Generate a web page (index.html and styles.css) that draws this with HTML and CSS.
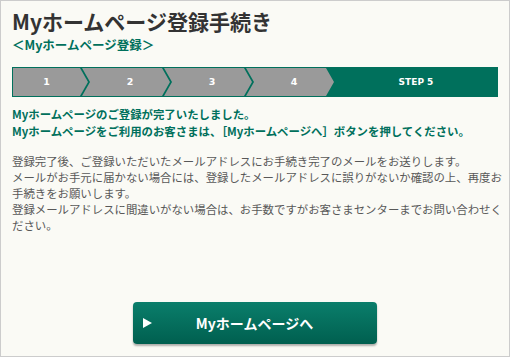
FILE: index.html
```html
<!DOCTYPE html>
<html lang="ja">
<head>
	<meta charset="UTF-8">
	<meta name="viewport" content="width=device-width, initial-scale=1.0">
	<title>Myホームページ登録手続き</title>
	<link rel="stylesheet" href="styles.css">
</head>
<body>
	<div class="page">
		<h1 class="title">Myホームページ登録手続き</h1>
		<p class="sub">＜Myホームページ登録＞</p>

		<!-- ステップ表示 -->
		<ol class="steps">
			<li class="step first">1</li>
			<li class="step">2</li>
			<li class="step">3</li>
			<li class="step">4</li>
			<li class="step current">STEP 5</li>
		</ol>

		<p class="done">
			Myホームページのご登録が完了いたしました。<br>
			Myホームページをご利用のお客さまは、［Myホームページへ］ボタンを押してください。
		</p>

		<p class="note">登録完了後、ご登録いただいたメールアドレスにお手続き完了のメールをお送りします。<br>メールがお手元に届かない場合には、登録したメールアドレスに誤りがないか確認の上、再度お手続きをお願いします。<br>登録メールアドレスに間違いがない場合は、お手数ですがお客さまセンターまでお問い合わせください。</p>

		<div class="actions">
			<a class="btn" href="#">
				<span class="arrow"></span>
				<span class="label">Myホームページへ</span>
			</a>
		</div>
	</div>
</body>
</html>
```

FILE: styles.css
```css
* {
	margin: 0;
	padding: 0;
	box-sizing: border-box;
}

body {
	font-family: "Noto Sans CJK JP", "Noto Sans", sans-serif;
	background: #fafaf5;
}

.page {
	width: 510px;
	height: 357px;
	border: 1px solid #cccccc;
	background: #fafaf5;
	padding: 0 4px 0 11px;
	overflow: hidden;
}

.title {
	padding-top: 5px;
	font-size: 21px;
	line-height: 30px;
	font-weight: bold;
	color: #333333;
}

.sub {
	font-size: 12.5px;
	line-height: 18px;
	font-weight: bold;
	color: #00705c;
}

/* ステップ */
.steps {
	display: flex;
	list-style: none;
	width: 486px;
	height: 30px;
	margin-top: 13px;
	padding: 1px 0 1px 1px;
	background: #00705c;
}

.step {
	width: 88px;
	margin-left: -6px;
	padding: 0 8px 0 16px;
	background: #9a9a9a;
	color: #fff;
	font: bold 9.5px/28px "DejaVu Sans", sans-serif;
	text-align: center;
	clip-path: polygon(0 0, 80px 0, 100% 50%, 80px 100%, 0 100%, 8px 50%);
}

.step.first {
	width: 75px;
	margin-left: 0;
	padding: 0 8px 0 0;
	clip-path: polygon(0 0, 67px 0, 100% 50%, 67px 100%, 0 100%);
}

.step.current {
	flex: 1;
	padding: 0;
	margin-left: 0;
	background: none;
	clip-path: none;
	font-size: 9px;
}

.done {
	margin-top: 9px;
	font-size: 11.4px;
	line-height: 17px;
	font-weight: bold;
	color: #00705c;
}

.note {
	width: 494px;
	margin-top: 13px;
	font-size: 11.4px;
	line-height: 16px;
	color: #585858;
}

/* ボタン */
.actions {
	display: flex;
	justify-content: center;
	padding-right: 8px;
	margin-top: 69px;
}

.btn {
	display: flex;
	align-items: center;
	width: 244px;
	height: 42px;
	padding: 0 19px 0 10px;
	border-radius: 4px;
	background: linear-gradient(#0a7e6b, #005f4f);
	box-shadow: 0 2px 2px rgba(0, 0, 0, 0.3);
	color: #fff;
	text-decoration: none;
}

.arrow {
	width: 0;
	height: 0;
	border-style: solid;
	border-width: 5px 0 5px 9px;
	border-color: transparent transparent transparent #fff;
}

.label {
	flex: 1;
	text-align: center;
	font-size: 14px;
	font-weight: bold;
}
```
